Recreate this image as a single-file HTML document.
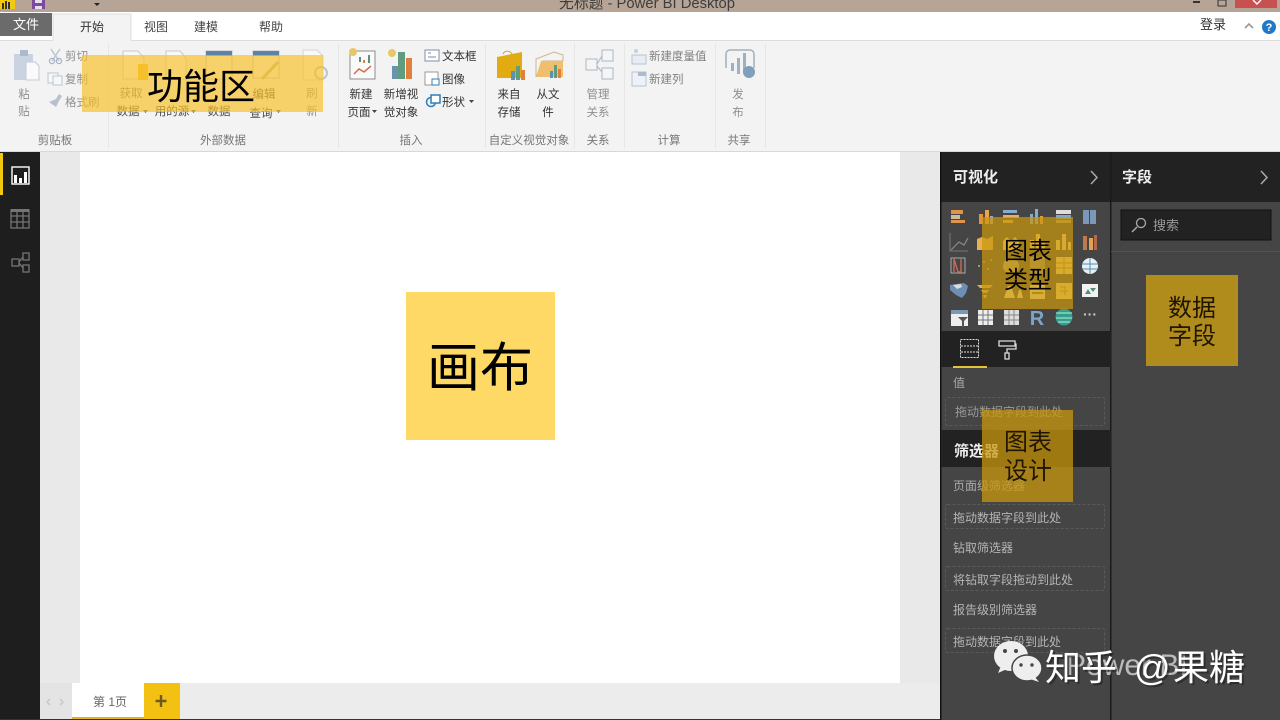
<!DOCTYPE html>
<html lang="zh"><head><meta charset="utf-8"><title>Power BI Desktop</title>
<style>
html,body{margin:0;padding:0;width:1280px;height:720px;overflow:hidden;background:#fff}
svg{display:block}
text{font-family:"Liberation Sans","Noto Sans CJK SC",sans-serif;font-size:11.5px;fill:#555}
.m{text-anchor:middle}
.rb{fill:#4a4a4a}
.dim{fill:#8f8f8f}
.grp{fill:#777}
.pn{fill:#b5b5b5}
.dash{fill:none;stroke:#5a5a5a;stroke-dasharray:3 2}
.ov{fill:#000}
</style></head><body>
<svg width="1280" height="720" viewBox="0 0 1280 720" xmlns="http://www.w3.org/2000/svg">
<!-- title bar -->
<rect width="1280" height="12" fill="#b6a596"/>
<rect y="12" width="1280" height="28" fill="#fff"/>
<rect x="0" y="0" width="15" height="9" fill="#f2c811"/>
<rect x="2" y="3" width="2" height="6" fill="#333"/><rect x="5" y="1" width="2" height="8" fill="#333"/><rect x="8" y="2" width="2" height="7" fill="#333"/>
<rect x="32" y="0" width="13" height="9" fill="#7a4a9c"/><rect x="35" y="0" width="7" height="3" fill="#e6e0ec"/><rect x="35" y="6" width="7" height="3" fill="#e6e0ec"/>
<path d="M94 3h6l-3 3z" fill="#222"/>
<text x="647" y="8" class="m" style="font-size:14.8px;fill:#3d3d3d">无标题 - Power BI Desktop</text>
<rect x="1193" y="1" width="7" height="2" fill="#333"/>
<rect x="1218" y="0" width="8" height="6" fill="none" stroke="#333"/>
<rect x="1235" y="0" width="42" height="8" fill="#c75050"/>
<path d="M1253 0l4 4 4-4" fill="none" stroke="#fff" stroke-width="1.4"/>
<!-- tabs -->
<rect x="0" y="13" width="52" height="23" fill="#6b6b6b"/>
<text x="26" y="29" class="m" style="font-size:13px;fill:#fff">文件</text>
<rect x="53" y="14" width="78" height="27" fill="#f3f3f3"/>
<path d="M53 40V14H131V40" fill="none" stroke="#dcdcdc"/>
<text x="92" y="31" class="m" style="fill:#333;font-size:12px">开始</text>
<text x="156" y="31" class="m" style="fill:#444;font-size:12px">视图</text>
<text x="206" y="31" class="m" style="fill:#444;font-size:12px">建模</text>
<text x="271" y="31" class="m" style="fill:#444;font-size:12px">帮助</text>
<text x="1213" y="29" class="m" style="font-size:13px;fill:#333">登录</text>
<path d="M1245 28l4-4 4 4" fill="none" stroke="#999" stroke-width="1.6"/>
<circle cx="1269" cy="27" r="7" fill="#1f78c8"/>
<text x="1269" y="31" class="m" style="font-size:11px;font-weight:bold;fill:#fff">?</text>
<!-- ribbon -->
<rect y="40" width="1280" height="111" fill="#f3f3f3"/>
<rect y="40" width="53" height="1" fill="#dcdcdc"/><rect x="131" y="40" width="1149" height="1" fill="#dcdcdc"/>
<rect y="151" width="1280" height="1.5" fill="#d8d8d8"/>
<g fill="#e6e6e6"><rect x="108" y="44" width="1" height="104"/><rect x="338" y="44" width="1" height="104"/><rect x="485" y="44" width="1" height="104"/><rect x="574" y="44" width="1" height="104"/><rect x="624" y="44" width="1" height="104"/><rect x="715" y="44" width="1" height="104"/><rect x="765" y="44" width="1" height="104"/></g>
<!-- clipboard -->
<rect x="14" y="54" width="19" height="26" fill="#c9d3e2"/><rect x="20" y="50" width="8" height="6" fill="#aeb9c9"/>
<path d="M26 62h9l4 4v14H26z" fill="#fafafa" stroke="#c3cbd8"/>
<text x="24" y="98" class="m dim">粘</text><text x="24" y="115" class="m dim">贴</text>
<path d="M51 49l8 12M60 49l-8 12" stroke="#bcc6d3" stroke-width="1.5" fill="none"/><circle cx="52" cy="61" r="2.6" fill="none" stroke="#a9b6c6" stroke-width="1.3"/><circle cx="59" cy="61" r="2.6" fill="none" stroke="#a9b6c6" stroke-width="1.3"/>
<text x="65" y="60" class="dim">剪切</text>
<rect x="48" y="73" width="10" height="10" fill="#f7f7f7" stroke="#b9c4d2"/><rect x="53" y="76" width="9" height="9" fill="#f7f7f7" stroke="#b9c4d2"/>
<text x="65" y="83" class="dim">复制</text>
<path d="M49 102l7-3 3-5 3 2-3 5-3 6z" fill="#b7c1ce"/>
<text x="65" y="106" class="dim">格式刷</text>
<text x="55" y="144" class="m grp">剪贴板</text>
<!-- external data -->
<path d="M123 51h15l6 7v21h-21z" fill="#f8f8f8" stroke="#c9c9c9"/><rect x="138" y="64" width="10" height="16" fill="#f2c230"/>
<path d="M166 51h14l6 7v21h-20z" fill="#f8f8f8" stroke="#c9c9c9"/>
<rect x="206" y="51" width="26" height="28" fill="#f6f6f6" stroke="#c2c2c2"/><rect x="206" y="51" width="26" height="5" fill="#5f83a8"/>
<rect x="253" y="51" width="26" height="27" fill="#f6f6f6" stroke="#c2c2c2"/><rect x="253" y="51" width="26" height="5" fill="#5f83a8"/>
<path d="M262 79l16-17" stroke="#c0b894" stroke-width="3"/>
<path d="M303 50h14l6 6v24h-20z" fill="#f8f8f8" stroke="#d5d5d5"/>
<circle cx="321" cy="73" r="6" fill="none" stroke="#bcc6d3" stroke-width="2"/>
<text x="131" y="97" class="m rb" style="fill:#777">获取</text><text x="128" y="115" class="m rb">数据</text><path d="M143 110h5l-2.500 3z" fill="#555"/>
<text x="172" y="115" class="m rb">用的源</text><path d="M191 110h5l-2.500 3z" fill="#555"/>
<text x="219" y="115" class="m rb">数据</text>
<text x="264" y="98" class="m rb">编辑</text><text x="261" y="117" class="m rb">查询</text><path d="M276 110h5l-2.500 3z" fill="#555"/>
<text x="312" y="97" class="m dim">刷</text><text x="312" y="115" class="m dim">新</text>
<text x="223" y="144" class="m grp">外部数据</text>
<!-- insert -->
<rect x="350" y="51" width="25" height="28" fill="#fafafa" stroke="#8c8c8c"/>
<path d="M354 74l5-5 5 3 7-6" fill="none" stroke="#d66b45" stroke-width="1.500"/><rect x="359" y="57" width="2" height="5" fill="#5a8f7b"/><rect x="363" y="60" width="2" height="3" fill="#e07f3f"/><rect x="368" y="55" width="2" height="8" fill="#5a8f7b"/>
<circle cx="353" cy="52" r="4" fill="#e8c76a"/>
<rect x="392" y="66" width="6" height="13" fill="#6c93ad"/><rect x="398" y="52" width="7" height="27" fill="#5f9c80"/><rect x="406" y="58" width="6" height="21" fill="#e0803e"/>
<circle cx="392" cy="53" r="4" fill="#e8c76a"/>
<rect x="425" y="50" width="14" height="11" fill="#fff" stroke="#7d8fa5"/><path d="M428 53h3M428 57h8" stroke="#6f88a5"/>
<text x="442" y="60" style="fill:#333">文本框</text>
<rect x="425" y="72" width="13" height="13" fill="#fff" stroke="#999"/><rect x="432" y="79" width="7" height="6" fill="#fff" stroke="#2f7db8"/>
<text x="442" y="83" style="fill:#333">图像</text>
<circle cx="431" cy="102" r="4.500" fill="none" stroke="#2f7db8" stroke-width="1.500"/><rect x="431" y="95" width="9" height="8" fill="#fff" stroke="#2f7db8" stroke-width="1.500"/>
<text x="442" y="106" style="fill:#333">形状</text><path d="M469 100h5l-2.500 3z" fill="#444"/>
<text x="361" y="98" class="m" style="fill:#333">新建</text><text x="359" y="116" class="m" style="fill:#333">页面</text><path d="M372 110h5l-2.500 3z" fill="#444"/>
<text x="401" y="98" class="m" style="fill:#333">新增视</text><text x="401" y="116" class="m" style="fill:#333">觉对象</text>
<text x="411" y="144" class="m grp">插入</text>
<!-- custom visual -->
<path d="M497 57l25-5v26h-25z" fill="#e2ab12"/><path d="M503 54a5 5 0 0 1 9 0" fill="none" stroke="#c9a53a"/>
<rect x="511" y="71" width="4" height="9" fill="#5e91ad"/><rect x="516" y="66" width="4" height="14" fill="#5f9c80"/><rect x="521" y="70" width="4" height="10" fill="#e0803e"/>
<path d="M536 59l18-7 9 3v6h-20l-7 16z" fill="#f3f3f3" stroke="#cdb98c"/><path d="M536 77l5-16h22v16z" fill="#f0bf6e"/>
<rect x="550" y="71" width="3" height="7" fill="#5e91ad"/><rect x="554" y="65" width="3" height="13" fill="#5f9c80"/><rect x="558" y="69" width="3" height="9" fill="#e0803e"/>
<text x="509" y="98" class="m" style="fill:#333">来自</text><text x="509" y="116" class="m" style="fill:#333">存储</text>
<text x="548" y="98" class="m" style="fill:#333">从文</text><text x="548" y="116" class="m" style="fill:#333">件</text>
<text x="529" y="144" class="m grp">自定义视觉对象</text>
<!-- relations -->
<g fill="#f5f5f5" stroke="#a9b7c6"><rect x="586" y="59" width="11" height="11"/><rect x="602" y="50" width="11" height="11"/><rect x="602" y="68" width="11" height="11"/></g>
<path d="M597 64l5-8M597 66l5 6" stroke="#a9b7c6" fill="none"/>
<text x="598" y="98" class="m dim">管理</text><text x="598" y="116" class="m dim">关系</text>
<text x="598" y="144" class="m grp">关系</text>
<!-- calc -->
<rect x="632" y="55" width="14" height="9" fill="#e7edf3" stroke="#b5c3d2"/><circle cx="636" cy="51" r="2" fill="#c3cfdc"/>
<text x="649" y="60" class="dim" style="fill:#7f7f7f">新建度量值</text>
<rect x="632" y="72" width="14" height="14" fill="#eef2f6" stroke="#b5c3d2"/><rect x="638" y="72" width="8" height="4" fill="#a9bbcc"/>
<text x="649" y="83" class="dim" style="fill:#7f7f7f">新建列</text>
<text x="669" y="144" class="m grp">计算</text>
<!-- share -->
<path d="M726 68V54a4 4 0 0 1 4-4h20a4 4 0 0 1 4 4v14" fill="none" stroke="#9fb0c0" stroke-width="1.500"/>
<rect x="731" y="63" width="3" height="8" fill="#9fb0c0"/><rect x="737" y="58" width="3" height="16" fill="#9fb0c0"/><rect x="743" y="53" width="3" height="20" fill="#9fb0c0"/>
<circle cx="749" cy="72" r="6" fill="#7f9fba"/>
<text x="738" y="98" class="m dim">发</text><text x="738" y="116" class="m dim">布</text>
<text x="739" y="144" class="m grp">共享</text>
<!-- main -->
<rect y="152" width="40" height="568" fill="#1e1e1e"/>
<rect x="40" y="152" width="901" height="531" fill="#e9e9e9"/>
<rect x="80" y="152" width="820" height="531" fill="#fff"/>
<rect x="0" y="153" width="3" height="42" fill="#f2c811"/>
<rect x="12" y="167" width="17" height="17" fill="none" stroke="#fff" stroke-width="1.400"/>
<rect x="14" y="175" width="3" height="8" fill="#fff"/><rect x="19" y="178" width="3" height="5" fill="#fff"/><rect x="24" y="172" width="3" height="11" fill="#fff"/>
<g fill="none" stroke="#757575" stroke-width="1.300"><rect x="11" y="210" width="18" height="18"/><path d="M11 216h18M11 222h18M17 210v18M23 210v18"/>
<rect x="12" y="259" width="7" height="7"/><rect x="23" y="253" width="6" height="7"/><rect x="23" y="265" width="6" height="7"/><path d="M19 262l4-5M19 263l4 5"/></g>
<rect x="11" y="209" width="18" height="3" fill="#757575"/>
<!-- bottom tabs -->
<rect x="40" y="683" width="901" height="36" fill="#ececec"/>
<rect x="40" y="683" width="32" height="36" fill="#e4e4e4"/>
<path d="M50 699l-3 3 3 3M60 699l3 3-3 3" fill="none" stroke="#c6c6c6" stroke-width="1.300"/>
<rect x="72" y="683" width="72" height="36" fill="#fff"/>
<rect x="72" y="717" width="72" height="2" fill="#e0b520"/>
<text x="110" y="706" class="m" style="fill:#666;font-size:12px">第 1页</text>
<rect x="144" y="683" width="36" height="36" fill="#f2c112"/>
<path d="M161 695v12M155.500 701h11" stroke="#6d5a20" stroke-width="2.400"/>
<rect y="719" width="1280" height="1" fill="#333"/>
<!-- right panels -->
<rect x="941" y="152" width="339" height="568" fill="#454545"/>
<rect x="941" y="152" width="339" height="50" fill="#222"/>
<rect x="940" y="152" width="1.500" height="568" fill="#111"/>
<rect x="1110" y="152" width="1.500" height="568" fill="#1a1a1a"/>
<text x="953" y="182" style="font-size:15px;fill:#eee;font-weight:bold">可视化</text>
<text x="1122" y="182" style="font-size:15px;fill:#eee;font-weight:bold">字段</text>
<path d="M1091 171l6 6.500-6 6.500M1261 171l6 6.500-6 6.500" fill="none" stroke="#aaa" stroke-width="1.500"/>
<rect x="1121" y="210" width="150" height="30" fill="#222" stroke="#111"/>
<circle cx="1141" cy="223" r="4.500" fill="none" stroke="#aaa" stroke-width="1.300"/><path d="M1137 227l-5 5" stroke="#aaa" stroke-width="1.500"/>
<text x="1153" y="230" style="fill:#999;font-size:13px">搜索</text>
<rect x="1111" y="251" width="169" height="1" fill="#525252"/>
<!-- viz icons -->
<g fill="#c99a58">
<rect x="951" y="210" width="12" height="4" fill="#e0934a"/><rect x="951" y="215" width="9" height="4" fill="#cdbb9c"/><rect x="951" y="220" width="14" height="3" fill="#e0934a"/>
<rect x="979" y="214" width="4" height="10" fill="#e8903e"/><rect x="985" y="210" width="4" height="14" fill="#eba545"/><rect x="990" y="216" width="3" height="8" fill="#aab"/>
<rect x="1003" y="210" width="14" height="3" fill="#8aaccc"/><rect x="1003" y="215" width="16" height="3" fill="#e6b060"/><rect x="1003" y="220" width="10" height="3" fill="#e6b060"/>
<rect x="1030" y="214" width="3" height="10" fill="#8aaccc"/><rect x="1035" y="209" width="3" height="15" fill="#8aaccc"/><rect x="1040" y="216" width="3" height="8" fill="#e6a040"/>
<rect x="1056" y="210" width="15" height="4" fill="#ddd"/><rect x="1056" y="215" width="15" height="4" fill="#88a8c4"/><rect x="1056" y="220" width="15" height="3" fill="#ba9a60"/>
<rect x="1083" y="210" width="6" height="14" fill="#7b98b8"/><rect x="1090" y="210" width="6" height="14" fill="#7b98b8"/>
<path d="M951 250l8-8 5 3 4-7" fill="none" stroke="#8a8a8a" stroke-width="1.200"/><path d="M950 233v18h18" fill="none" stroke="#777"/>
<path d="M977 250v-11l5-2 5 2 6-3v14z" fill="#eab050"/>
<path d="M1003 250v-9l4-4 4 4 4-4 4 4v9z" fill="#ffe08a"/>
<rect x="1030" y="240" width="4" height="10" fill="#ffdf80"/><rect x="1036" y="234" width="4" height="16" fill="#ffdf80"/><rect x="1042" y="243" width="3" height="7" fill="#ffdf80"/>
<rect x="1056" y="240" width="4" height="10" fill="#ffdf80"/><rect x="1062" y="234" width="4" height="16" fill="#ffdf80"/><rect x="1068" y="242" width="3" height="8" fill="#ffdf80"/>
<rect x="1056" y="257" width="16" height="17" fill="#ffe08a"/><path d="M1056 263h16M1056 268h16M1064 257v17" stroke="#b8912a"/>
<rect x="1030" y="257" width="15" height="17" fill="#e8d8a8" opacity=".5"/>
<rect x="1056" y="283" width="16" height="16" fill="#ffe08a"/><path d="M1060 287h5v8M1060 291h8" fill="none" stroke="#b8912a"/>
<rect x="1030" y="285" width="15" height="14" fill="#ffe8a8"/><rect x="1032" y="292" width="11" height="2" fill="#8a6e20"/>
<path d="M1004 298l4-12h3l4 12zM1017 298l2-8h2l2 8" fill="#ffe8a8"/>
<circle cx="1011" cy="266" r="8" fill="#ffe8a8" opacity=".6"/>
<rect x="951" y="258" width="14" height="15" fill="none" stroke="#aaa"/><path d="M954 272v-13l4 13h3v-13" fill="none" stroke="#c96a5a" stroke-width="1.400"/>
<g fill="#d8aa55"><circle cx="979" cy="266" r="1"/><circle cx="984" cy="262" r="1"/><circle cx="988" cy="269" r="1"/><circle cx="991" cy="260" r="1"/></g>
<path d="M950 285l14-2 4 3-2 7-4 5-6-3-6-5z" fill="#6d8fb5"/><path d="M953 285l8-1 1 3-5 2z" fill="#ddd"/>
<path d="M977 285h16l-3 3h-10zM981 290h8l-2 3h-4zM983 295h4l-1 3h-2z" fill="#e0b050"/>
<rect x="951" y="310" width="17" height="16" fill="#eee"/><rect x="951" y="310" width="17" height="4" fill="#7b98b8"/><path d="M958 317h10l-4 4v6h-2v-6z" fill="#555"/>
<rect x="978" y="310" width="15" height="15" fill="#eee"/><path d="M983 310v15M988 310v15M978 315h15M978 320h15" stroke="#777"/>
<rect x="1004" y="310" width="15" height="15" fill="#ddd"/><path d="M1009 310v15M1014 310v15M1004 315h15M1004 320h15" stroke="#888"/>
<text x="1037" y="325" class="m" style="font-size:20px;font-weight:bold;fill:#7ea4c8">R</text>
<circle cx="1064" cy="317" r="8.500" fill="#3b9a8c"/><path d="M1056 313h16M1056 318h16M1058 322h12" stroke="#9fd" stroke-width="1"/>
<text x="1090" y="319" class="m" style="font-size:14px;fill:#ccc;font-weight:bold">···</text>
<rect x="1083" y="236" width="4" height="14" fill="#c07850"/><rect x="1089" y="238" width="4" height="12" fill="#e6a050"/><rect x="1094" y="235" width="3" height="15" fill="#b06a50"/>
<circle cx="1090" cy="266" r="8" fill="#e9f0f5"/><path d="M1082 264h16M1082 269h16M1090 258v16" stroke="#4f8fb0"/>
<rect x="1082" y="284" width="16" height="13" fill="#f2f2f2"/><path d="M1085 294l3-5 3 5zM1090 288h6l-3 4z" fill="#4f8f80"/>
</g>
<!-- pane tabs -->
<rect x="941" y="331" width="170" height="36" fill="#222"/>
<rect x="953" y="366" width="34" height="2" fill="#e4c33a"/>
<g fill="none" stroke="#ddd"><rect x="960.500" y="339.500" width="18" height="18" stroke-dasharray="2 1"/><path d="M961 346h18M961 352h18" stroke-dasharray="2 1"/>
<path d="M999 341h16v5h-16zM1015 344h1v5h-9v4M1005 353h4v6h-4z" stroke-width="1.300"/></g>
<text x="953" y="387" style="fill:#aaa;font-size:12px">值</text>
<rect x="945.500" y="397.500" width="159" height="28" rx="2" class="dash"/>
<text x="955" y="416" class="pn" style="fill:#9a9a9a;font-size:12px">拖动数据字段到此处</text>
<rect x="941" y="430" width="170" height="37" fill="#222"/>
<text x="954" y="456" style="font-size:15px;fill:#eee;font-weight:bold">筛选器</text>
<text x="953" y="490" class="pn" style="fill:#aaa;font-size:12px">页面级筛选器</text>
<rect x="945.500" y="504.500" width="159" height="24" rx="2" class="dash"/>
<text x="953" y="522" class="pn" style="font-size:12px">拖动数据字段到此处</text>
<text x="953" y="552" class="pn" style="font-size:12px">钻取筛选器</text>
<rect x="945.500" y="566.500" width="159" height="24" rx="2" class="dash"/>
<text x="953" y="584" class="pn" style="font-size:12px">将钻取字段拖动到此处</text>
<text x="953" y="614" class="pn" style="font-size:12px">报告级别筛选器</text>
<rect x="945.500" y="628.500" width="159" height="24" rx="2" class="dash"/>
<text x="953" y="646" class="pn" style="font-size:12px">拖动数据字段到此处</text>
<!-- callouts -->
<rect x="82" y="55" width="241" height="57" fill="#f8c027" opacity=".68"/>
<text x="201" y="99" class="m ov" style="font-size:36px">功能区</text>
<rect x="406" y="292" width="149" height="148" fill="#ffd966"/>
<text x="480" y="386" class="m ov" style="font-size:53px">画布</text>
<rect x="982" y="217" width="91" height="92" fill="#c8970c" opacity=".72"/>
<text x="1028" y="259" class="m ov" style="font-size:24px">图表</text>
<text x="1028" y="288" class="m ov" style="font-size:24px">类型</text>
<rect x="982" y="410" width="91" height="92" fill="#c8970c" opacity=".75"/>
<text x="1028" y="450" class="m ov" style="font-size:24px;fill:#1f1500">图表</text>
<text x="1028" y="479" class="m ov" style="font-size:24px;fill:#1f1500">设计</text>
<rect x="1146" y="275" width="92" height="91" fill="#b08c1c"/>
<text x="1192" y="316" class="m ov" style="font-size:24px;fill:#1f1500">数据</text>
<text x="1192" y="344" class="m ov" style="font-size:24px;fill:#1f1500">字段</text>
<!-- watermark -->
<ellipse cx="1011" cy="656" rx="17" ry="15" fill="#eee"/><path d="M1001 666l-3 7 9-4z" fill="#eee"/>
<ellipse cx="1027" cy="668" rx="15" ry="13" fill="#eee" stroke="#454545" stroke-width="1.500"/><path d="M1035 677l4 5-9-3z" fill="#eee"/>
<circle cx="1005" cy="651" r="2" fill="#454545"/><circle cx="1016" cy="651" r="2" fill="#454545"/><circle cx="1021" cy="665" r="1.700" fill="#454545"/><circle cx="1032" cy="665" r="1.700" fill="#454545"/>
<text x="1066" y="675" style="font-size:30px;fill:#bbb">Power BI</text>
<g style="opacity:.6"><text x="1047" y="682" style="font-size:36px;fill:#222">知乎</text><text x="1136" y="682" style="font-size:36px;fill:#222">@</text><text x="1175" y="682" style="font-size:36px;fill:#222">果糖</text></g>
<text x="1045" y="680" style="font-size:36px;fill:#fff">知乎</text><text x="1134" y="680" style="font-size:36px;fill:#fff">@</text><text x="1173" y="680" style="font-size:36px;fill:#fff">果糖</text>
</svg>
</body></html>
